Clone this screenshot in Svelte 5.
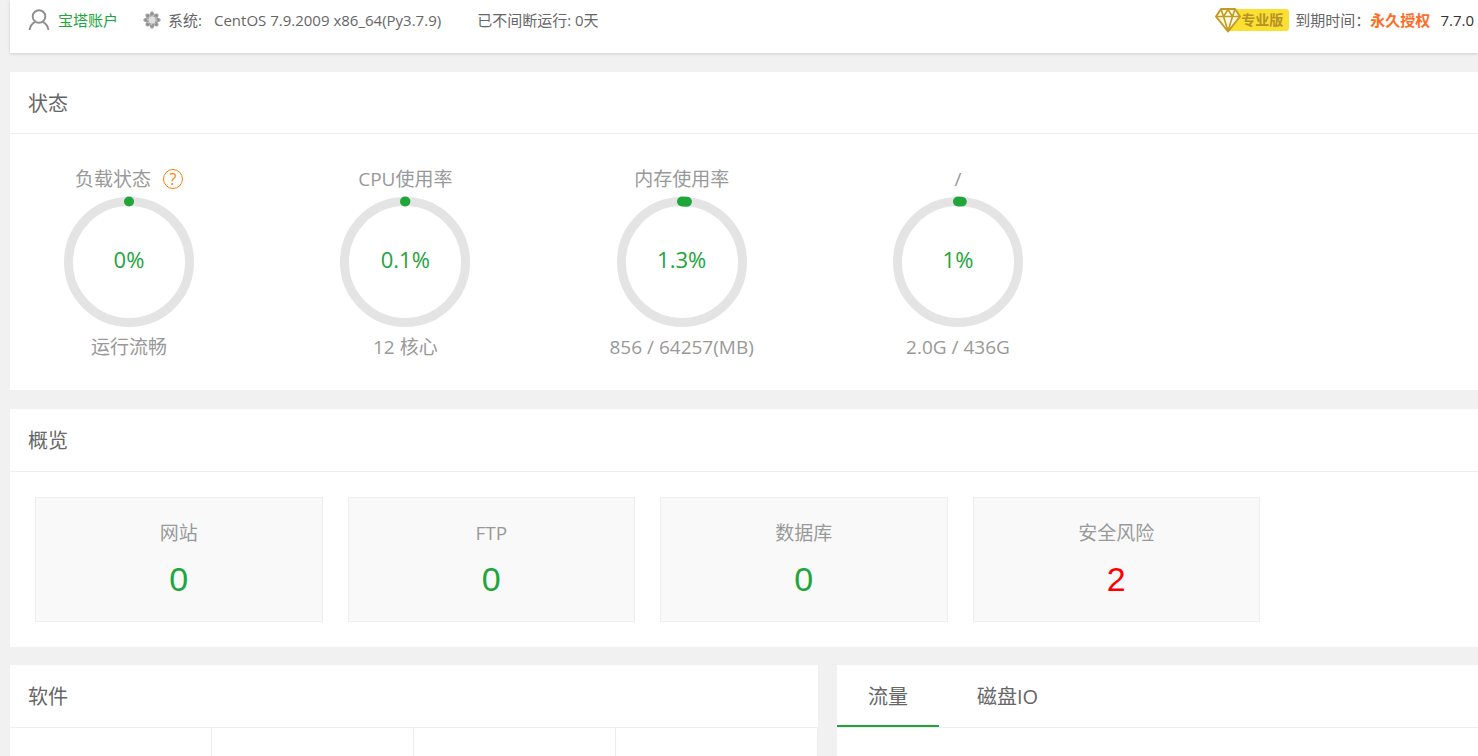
<script>
  const gauges = [
    { title: '负载状态', value: 0, note: '运行流畅', help: true },
    { title: 'CPU使用率', value: 0.1, note: '12 核心' },
    { title: '内存使用率', value: 1.3, note: '856 / 64257(MB)' },
    { title: '/', value: 1, note: '2.0G / 436G' }
  ];
  const cards = [
    { title: '网站', count: 0 },
    { title: 'FTP', count: 0 },
    { title: '数据库', count: 0 },
    { title: '安全风险', count: 2, risk: true }
  ];
  const tabs = ['流量', '磁盘IO'];
  let active = $state(0);

  const radius = 60.5;

  function arc(value) {
    const angle = (Math.max(value, 0.01) / 100) * Math.PI * 2;
    const x = 65 + radius * Math.sin(angle);
    const y = 65 - radius * Math.cos(angle);
    return `M65 ${65 - radius} A${radius} ${radius} 0 ${value > 50 ? 1 : 0} 1 ${x} ${y}`;
  }
</script>

<div class="page">
  <header class="topbar">
    <a class="account" href="#account">
      <svg width="22" height="22" viewBox="0 0 22 22" fill="none" stroke="#8f8f8f" stroke-width="1.9" aria-hidden="true">
        <circle cx="11" cy="7.5" r="6.3" />
        <path d="M1.6 21c.4-3.800 2.500-6.600 5.800-8.200M20.400 21c-.4-3.800-2.500-6.600-5.800-8.200" />
      </svg>
      <span>宝塔账户</span>
    </a>
    <div class="system">
      <svg width="18" height="18" viewBox="0 0 18 18" aria-hidden="true">
        {#each [0, 45, 90, 135, 180, 225, 270, 315] as turn}
          <g transform="rotate({turn} 9 9)">
            <path d="M6.400 4.500 7.300 1.500Q9 -1 10.700 1.500L11.600 4.500Z" fill="#a6a6a6" />
            <circle cx="9" cy="3.500" r="1.500" fill="#858585" />
          </g>
        {/each}
        <circle cx="9" cy="9" r="4.600" fill="none" stroke="#a0a0a0" stroke-width="2.400" />
        <circle cx="9" cy="9" r="3.200" fill="#dedede" />
        <circle cx="9" cy="9" r="4.600" fill="none" stroke="#ccc" stroke-width="1.200" stroke-dasharray="1.300 2.313" />
      </svg>
      <span>系统:</span>
      <span class="os">CentOS 7.9.2009 x86_64(Py3.7.9)</span>
    </div>
    <span class="uptime">已不间断运行: 0天</span>
    <div class="license">
      <span class="pro">
        <svg width="26" height="26" viewBox="0 0 26 26" fill="#fffbe0" stroke="#c39a24" stroke-width="2" stroke-linejoin="round" aria-hidden="true">
          <path d="M6 2H20L25 9.500 13 24.500 1 9.500Z" />
          <path d="M1 9.500H25M6 2 8.500 9.500 13 24 17.500 9.500 20 2M8.500 9.500 13 2.500 17.500 9.500" fill="none" stroke-width="1.600" />
        </svg>
        <span>专业版</span>
      </span>
      <span>到期时间：</span>
      <b>永久授权</b>
      <span class="version">7.7.0</span>
    </div>
  </header>

  <section class="panel status">
    <h2>状态</h2>
    <div class="gauges">
      {#each gauges as g}
        <div class="gauge">
          <h3>
            {g.title}
            {#if g.help}<a class="help" href="#load" aria-label="?">?</a>{/if}
          </h3>
          <div class="ring">
            <svg viewBox="0 0 130 130" aria-hidden="true">
              <circle cx="65" cy="65" r={radius} fill="none" stroke="#e4e4e4" stroke-width="9" />
              <path d={arc(g.value)} fill="none" stroke="#20a53a" stroke-width="10" stroke-linecap="round" />
            </svg>
            <span>{g.value}%</span>
          </div>
          <p>{g.note}</p>
        </div>
      {/each}
    </div>
  </section>

  <section class="panel overview">
    <h2>概览</h2>
    <div class="cards">
      {#each cards as c}
        <div class="card">
          <p>{c.title}</p>
          <a href="#detail" class:risk={c.risk}>{c.count}</a>
        </div>
      {/each}
    </div>
  </section>

  <div class="bottom">
    <section class="panel software">
      <h2>软件</h2>
      <div class="slots">
        {#each [0, 1, 2, 3] as slot (slot)}<div></div>{/each}
      </div>
    </section>
    <section class="panel">
      <div class="tabs" role="tablist">
        {#each tabs as tab, i}
          <button type="button" role="tab" aria-selected={active === i} class:active={active === i} onclick={() => (active = i)}>{tab}</button>
        {/each}
      </div>
    </section>
  </div>
</div>

<style>
  :global(body) {
    background: #f1f1f1;
    color: #666;
    font: 15px/20px "Open Sans", "Noto Sans CJK SC", sans-serif;
  }
  .page {
    box-sizing: border-box;
    min-height: 100vh;
    padding-left: 10px;
    display: flex;
    flex-direction: column;
  }
  h2, h3, p {
    margin: 0;
    font-weight: 400;
  }
  a {
    color: #20a53a;
    text-decoration: none;
  }
  .topbar {
    display: flex;
    align-items: center;
    height: 40px;
    padding: 0 4px 13px 18px;
    margin-bottom: 19px;
    background: #fff;
    box-shadow: 0 1px 3px rgba(0, 0, 0, 0.15);
    white-space: nowrap;
  }
  .account, .system, .license, .pro {
    display: flex;
    align-items: center;
  }
  .account {
    gap: 8px;
    margin-right: 25px;
  }
  .system {
    gap: 7px;
  }
  .os {
    margin-left: 5px;
  }
  .uptime {
    margin-left: 36px;
  }
  .license {
    margin-left: auto;
  }
  .license b {
    color: #fc6d26;
  }
  .version {
    margin-left: 10px;
    color: #333;
  }
  .pro {
    height: 22px;
    padding-right: 6px;
    margin-right: 6px;
    border-radius: 3px;
    background: linear-gradient(90deg, transparent 12px, #fbe032 12px);
    color: #b5912a;
    font-size: 14px;
    font-weight: 700;
  }
  .panel {
    background: #fff;
  }
  h2 {
    padding: 2px 18px 0;
    border-bottom: 1px solid #eee;
    font-size: 20px;
    line-height: 60px;
  }
  .status h2 {
    line-height: 59px;
  }
  .status {
    margin-bottom: 19px;
  }
  .overview {
    margin-bottom: 18px;
  }
  .gauges {
    display: flex;
    justify-content: space-between;
    max-width: 979px;
    padding: 32px 20px 30px 44px;
    color: #999;
    font-size: 19px;
    line-height: 26px;
  }
  .gauge {
    width: 150px;
    text-align: center;
    white-space: nowrap;
  }
  h3 {
    display: flex;
    justify-content: center;
    align-items: center;
    gap: 12px;
    font-size: 19px;
  }
  .help {
    box-sizing: border-box;
    width: 20px;
    height: 20px;
    border: 1px solid #ff8000;
    border-radius: 50%;
    color: #ff8000;
    font-size: 16px;
    line-height: 18px;
  }
  .ring {
    display: grid;
    place-items: center;
    margin: 5px 10px 7px;
    color: #20a53a;
    font-size: 22px;
  }
  .ring > * {
    grid-area: 1 / 1;
  }
  .ring svg {
    display: block;
    width: 100%;
    overflow: visible;
  }
  .ring span {
    padding-bottom: 6px;
  }
  .cards {
    display: grid;
    grid-template-columns: repeat(4, 1fr);
    gap: 25px;
    max-width: 1225px;
    padding: 25px;
  }
  .card {
    box-sizing: border-box;
    height: 125px;
    padding-top: 21px;
    border: 1px solid #eee;
    background: #f9f9f9;
    text-align: center;
  }
  .card p {
    color: #999;
    font-size: 19px;
    line-height: 28px;
  }
  .card a {
    display: block;
    margin-top: 12px;
    font: 34px/40px "Liberation Sans", sans-serif;
  }
  .card .risk {
    color: #f00;
  }
  .bottom {
    flex: 1;
    display: grid;
    grid-template-columns: 808fr 641fr;
    gap: 19px;
  }
  .software {
    display: flex;
    flex-direction: column;
  }
  .slots {
    flex: 1;
    display: grid;
    grid-template-columns: repeat(4, 1fr);
    min-height: 28px;
  }
  .slots div {
    border-right: 1px solid #ebebf8;
  }
  .tabs {
    display: flex;
    height: 62px;
    border-bottom: 1px solid #eee;
  }
  button {
    padding: 4px 31px 0;
    margin-right: 7px;
    border: 0;
    border-bottom: 2px solid transparent;
    background: none;
    color: inherit;
    font: inherit;
    font-size: 20px;
    cursor: pointer;
  }
  button.active {
    border-bottom-color: #20a53a;
  }
</style>
